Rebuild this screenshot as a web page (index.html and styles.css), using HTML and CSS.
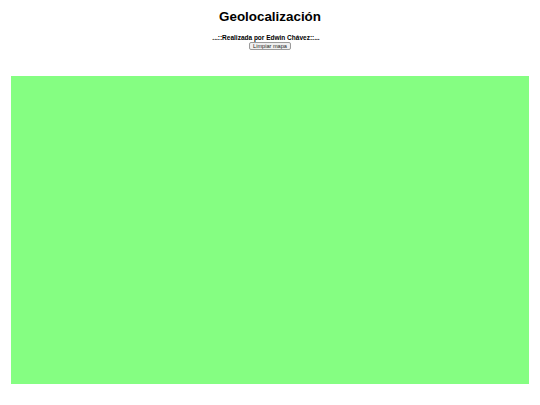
FILE: index.html
```html
<!DOCTYPE html>
<html lang="es">
<head>
<meta charset="utf-8">
<title>Geolocalización</title>
<link rel="stylesheet" href="styles.css">
</head>
<body>
<header class="top">
  <h1 class="title">Geolocalización</h1>
  <p class="author">...::Realizada por Edwin Chávez::...</p>
  <button class="clear" type="button">Limpiar mapa</button>
</header>
<div class="map"></div>
</body>
</html>
```

FILE: styles.css
```css
html, body {
  margin: 0;
  padding: 0;
  background: #ffffff;
}
body {
  font-family: "Liberation Sans", Arial, sans-serif;
  color: #000;
}
.top {
  display: flex;
  flex-direction: column;
  align-items: center;
  padding-top: 9px;
}
.title {
  margin: 0;
  font-size: 13.4px;
  font-weight: bold;
  line-height: 15px;
}
.author {
  margin: 10px 8px 0 0;
  font-size: 6.5px;
  font-weight: bold;
  line-height: 8px;
}
.clear {
  margin-top: 0;
  font-family: "Liberation Sans", Arial, sans-serif;
  font-size: 5.6px;
  line-height: 4px;
  padding: 1px 3px;
  border: 1px solid #9a9a9a;
  border-radius: 2px;
  background: #efefef;
  color: #222;
}
.map {
  margin: 26px 11px 0 11px;
  height: 308px;
  background: #85fe82;
}
```
